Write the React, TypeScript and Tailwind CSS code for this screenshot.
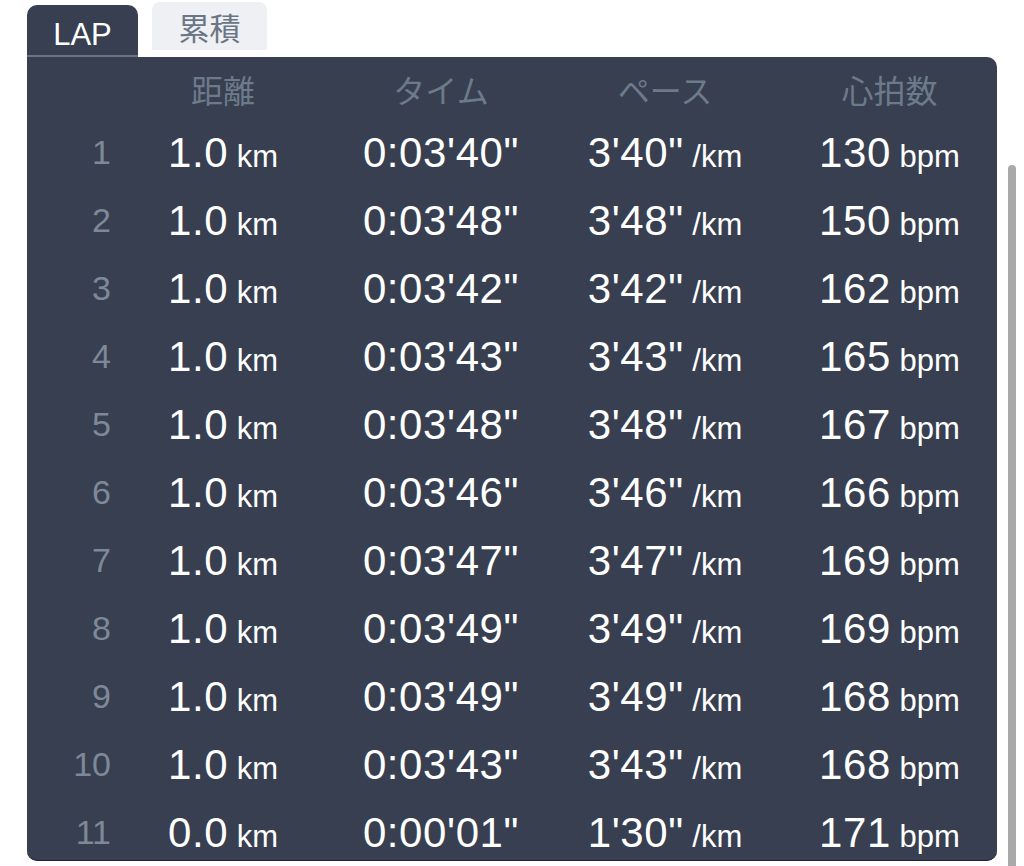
import React from 'react';

type Lap = {
    no: number;
    distance: string;
    time: string;
    pace: string;
    heartRate: number;
};

const laps: Lap[] = [
    { no: 1, distance: '1.0', time: `0:03'40"`, pace: `3'40"`, heartRate: 130 },
    { no: 2, distance: '1.0', time: `0:03'48"`, pace: `3'48"`, heartRate: 150 },
    { no: 3, distance: '1.0', time: `0:03'42"`, pace: `3'42"`, heartRate: 162 },
    { no: 4, distance: '1.0', time: `0:03'43"`, pace: `3'43"`, heartRate: 165 },
    { no: 5, distance: '1.0', time: `0:03'48"`, pace: `3'48"`, heartRate: 167 },
    { no: 6, distance: '1.0', time: `0:03'46"`, pace: `3'46"`, heartRate: 166 },
    { no: 7, distance: '1.0', time: `0:03'47"`, pace: `3'47"`, heartRate: 169 },
    { no: 8, distance: '1.0', time: `0:03'49"`, pace: `3'49"`, heartRate: 169 },
    { no: 9, distance: '1.0', time: `0:03'49"`, pace: `3'49"`, heartRate: 168 },
    { no: 10, distance: '1.0', time: `0:03'43"`, pace: `3'43"`, heartRate: 168 },
    { no: 11, distance: '0.0', time: `0:00'01"`, pace: `1'30"`, heartRate: 171 },
];

const gridCols = 'grid grid-cols-[85px_222px_214px_234px_1fr] items-center';

function App() {
    return (
        <div className="relative h-[866px] w-[1024px] overflow-hidden bg-white font-['Liberation_Sans','Noto_Sans_CJK_JP',sans-serif]">
            {/* tabs */}
            <div className="flex h-[57px] items-start gap-[14px] pl-[27px]">
                <div className="mt-[5px] flex h-[52px] w-[111px] items-center justify-center rounded-t-[10px] border-b-2 border-[#6b7483] bg-[#373f51] pt-[10px] text-[31px] text-white">
                    LAP
                </div>
                <div className="mt-[2px] flex h-[48px] w-[115px] items-center justify-center rounded-t-[8px] bg-[#eef0f3] pt-[8px] text-[31px] text-[#6b7685]">
                    累積
                </div>
            </div>

            {/* lap table */}
            <div className="ml-[27px] h-[804px] w-[970px] overflow-hidden rounded-tr-[10px] rounded-b-[10px] border-b border-[#1c2232] bg-[#373f51]">
                <div className={`${gridCols} h-[61px] pt-[8px] text-[32px] text-[#6d7a89]`}>
                    <div></div>
                    <div className="text-center">距離</div>
                    <div className="text-center">タイム</div>
                    <div className="text-center">ペース</div>
                    <div className="text-center">心拍数</div>
                </div>
                {laps.map((lap) => (
                    <div key={lap.no} className={`${gridCols} h-[68px] text-white`}>
                        <div className="pr-[1px] text-right text-[34px] text-[#7d8998]">{lap.no}</div>
                        <div className="text-center">
                            <span className="text-[42px] tracking-[0.6px]">{lap.distance}</span>
                            <span className="text-[31px]"> km</span>
                        </div>
                        <div className="text-center text-[42px] tracking-[0.6px]">{lap.time}</div>
                        <div className="text-center">
                            <span className="text-[42px] tracking-[0.6px]">{lap.pace}</span>
                            <span className="text-[31px]"> /km</span>
                        </div>
                        <div className="text-center">
                            <span className="text-[42px] tracking-[0.6px]">{lap.heartRate}</span>
                            <span className="text-[31px]"> bpm</span>
                        </div>
                    </div>
                ))}
            </div>

            {/* scrollbar */}
            <div className="absolute right-[8px] top-[165px] h-[720px] w-[8px] rounded-full bg-[#a9a9a9]"></div>
        </div>
    );
}

export default App;
